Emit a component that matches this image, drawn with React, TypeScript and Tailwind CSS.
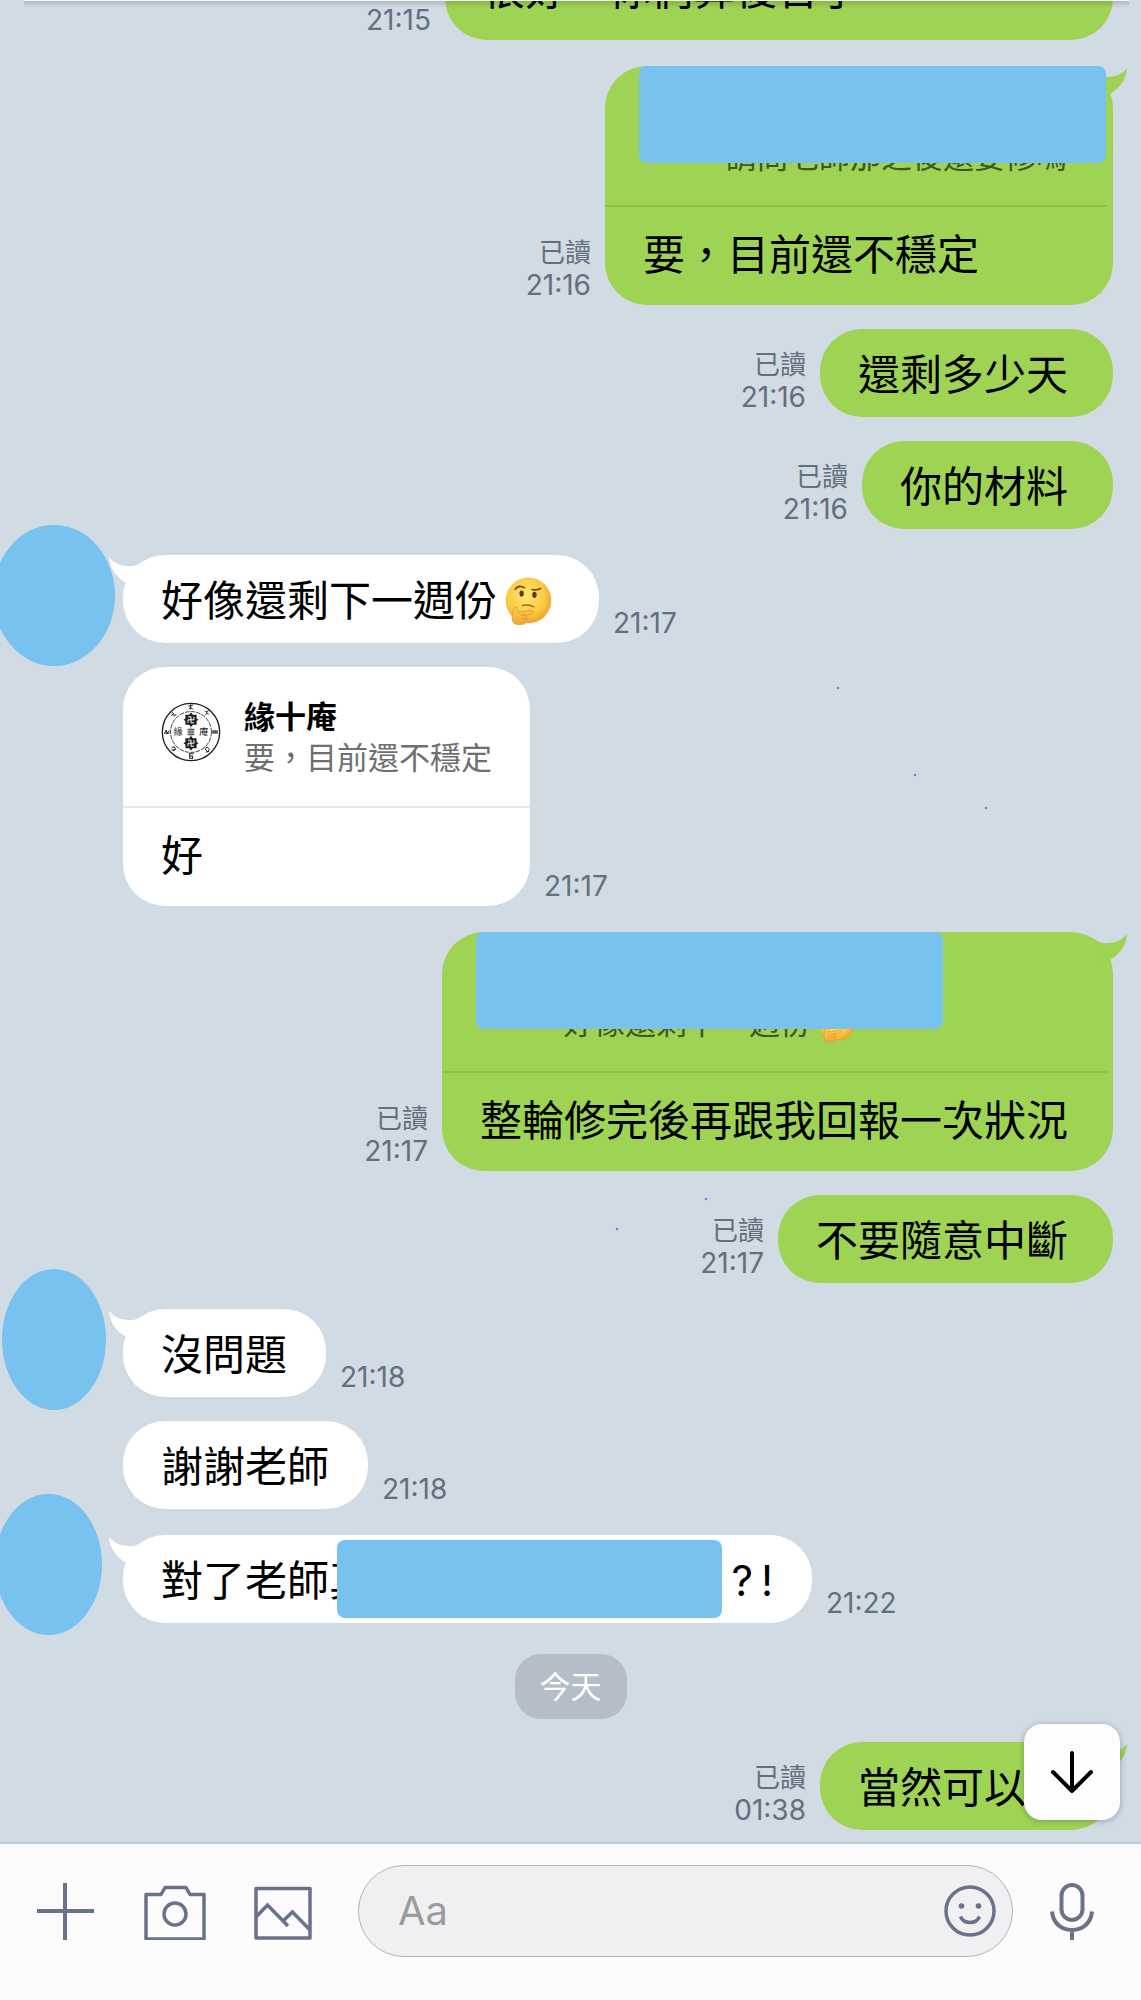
import * as React from "react";
import clsx from "clsx";

type BubbleProps = {
    mine?: boolean;
    tail?: boolean;
    className?: string;
    children: React.ReactNode;
};

type RowProps = {
    mine?: boolean;
    time: string;
    className?: string;
    avatar?: string;
    children: React.ReactNode;
};

type QuoteProps = {
    mine?: boolean;
    name?: string;
    text: React.ReactNode;
    avatar?: React.ReactNode;
    masked?: boolean;
};

function ThinkingFace({ className }: { className?: string }) {
    return (
        <svg viewBox="0 0 156 160" className={clsx("inline-block", className)} role="img" aria-label="🤔">
            <defs>
                <radialGradient id="face" cx="0.45" cy="0.4" r="0.62">
                    <stop offset="0" stopColor="#ffe670" />
                    <stop offset="0.65" stopColor="#fbcb43" />
                    <stop offset="1" stopColor="#eda02c" />
                </radialGradient>
                <linearGradient id="hand" x1="0" y1="0" x2="0" y2="1">
                    <stop offset="0" stopColor="#fdd04c" />
                    <stop offset="1" stopColor="#f0a53a" />
                </linearGradient>
            </defs>
            <circle cx="78" cy="78" r="73" fill="url(#face)" />
            <ellipse cx="56" cy="56" rx="7" ry="10" fill="#5f3a10" />
            <ellipse cx="97" cy="60" rx="7" ry="10" fill="#5f3a10" />
            <path d="M35 43Q46 26 65 38" fill="none" stroke="#6b4313" strokeWidth="5" strokeLinecap="round" />
            <path d="M89 43Q104 47 117 40" fill="none" stroke="#6b4313" strokeWidth="5" strokeLinecap="round" />
            <path d="M59 95Q76 89 95 99" fill="none" stroke="#8a5718" strokeWidth="4" strokeLinecap="round" />
            <path
                d="M34 99Q41 97 43 107L46 116Q64 113 88 110Q96 110 94 117Q92 121 68 126Q76 131 71 138Q73 153 58 155L40 155Q25 151 25 134Q26 116 34 99Z"
                fill="url(#hand)"
                stroke="#d98d28"
                strokeWidth="2"
            />
            <path d="M52 126Q61 122 70 126M55 138Q64 135 71 138" fill="none" stroke="#c97c20" strokeWidth="2" />
        </svg>
    );
}

function Seal() {
    return (
        <svg viewBox="60 64 182 182" className="size-[60px] shrink-0" aria-hidden="true">
            <g fill="none" stroke="#1c1c1c">
                <circle cx="151" cy="155" r="87" strokeWidth="4" />
                <circle cx="151" cy="155" r="62" strokeWidth="2.5" strokeDasharray="14 3" />
                <path d="M140 148h22M140 155h22M140 162h22M145 144v22M151 141v28M157 144v22" strokeWidth="2" />
                <g strokeWidth="3">
                    <path d="M143 77l14-4M150 71v16M144 86l6-6 7 7" />
                    <path d="M193 90l12 12M205 90l-8 4M194 103l6-5" />
                    <path d="M218 149v12M224 148v13M230 149v12M216 155h16" />
                    <path d="M194 206l6-6 7 8-7 7-6-9M196 216l10-2" />
                    <path d="M145 221h14M147 228h10M147 221v14h10M156 228v8" />
                    <path d="M92 204l8-5 4 8-8 6M92 210l12-2" />
                    <path d="M70 161l6-12 2 10 8-9M74 160l12-2" />
                    <path d="M90 106l8-7 2 8 7-7M92 98l4-3" />
                </g>
            </g>
            {[118, 189].map((y) => (
                <g key={y}>
                    <path d={`M151 ${y - 22}l6 7h11v11l6 4-6 4v11h-11l-6 7-6-7h-11v-11l-6-4 6-4v-11h11z`} fill="#222" />
                    <path
                        d={`M151 ${y - 9}v18M142 ${y}h18M151 ${y - 9}h-9M160 ${y}v-9M151 ${y + 9}h9M142 ${y}v9`}
                        stroke="#fff"
                        strokeWidth="3"
                        fill="none"
                    />
                </g>
            ))}
            <g fill="#222" fontSize="28" textAnchor="middle">
                <text x="112" y="165">緣</text>
                <text x="190" y="165">庵</text>
            </g>
        </svg>
    );
}

function Tail({ mine }: { mine?: boolean }) {
    return (
        <svg
            viewBox="0 0 32 30"
            className={clsx("absolute top-[2px] h-[30px] w-8", mine ? "-right-[14px] fill-[#9fd354]" : "-left-[14px] -scale-x-100 fill-white")}
            aria-hidden="true"
        >
            <path d="M0 6Q8 10 12 9Q25 9 32 0Q31 16 15 26L6 30z" />
        </svg>
    );
}

function Bubble({ mine, tail, className, children }: BubbleProps) {
    return (
        <div
            className={clsx(
                "relative rounded-[42px] text-[42px] leading-[50px] text-black",
                mine ? "bg-[#9fd354]" : "bg-white",
                className
            )}
        >
            {tail && <Tail mine={mine} />}
            {children}
        </div>
    );
}

function Row({ mine, time, className, avatar, children }: RowProps) {
    return (
        <div className={clsx("relative flex items-end gap-[14px]", mine ? "flex-row-reverse pr-7" : "pl-[123px]", className)}>
            {avatar && <span className={clsx("absolute h-[141px] rounded-[50%] bg-[#77c2ef]", avatar)} />}
            {children}
            <div className="pb-1 text-right leading-8 text-[#646e7e]">
                {mine && time !== "21:15" && <p className="text-[26px] leading-8">已讀</p>}
                <time className="block text-[28px] leading-8">{time}</time>
            </div>
        </div>
    );
}

function Quote({ mine, name, text, avatar, masked }: QuoteProps) {
    return (
        <div
            className={clsx(
                "relative flex h-[141px] gap-[23px] border-b-2 pt-[29px] pl-[38px] text-[31px] leading-[41px]",
                mine ? "mr-[6px] border-[#8fc04b] pr-10 text-[#40571f]" : "border-[#e3e7ea] pr-[38px] text-[#6f6f6f]"
            )}
        >
            <div className="mt-[6px] size-[60px] shrink-0">{avatar}</div>
            <div>
                <p className="h-[41px] font-bold text-black">{name}</p>
                <p className="flex items-center whitespace-nowrap">{text}</p>
            </div>
            {masked && <span className="absolute top-0 left-[34px] h-[97px] w-[467px] rounded-lg bg-[#77c2ef]" />}
        </div>
    );
}

const pill = "pt-[21px] pb-[17px] pl-[38px]";
const reply = "pt-[23px] pb-[25px] pl-[38px]";

export default function App() {
    const [message, setMessage] = React.useState("");

    return (
        <div
            lang="zh-Hant"
            className="relative flex min-h-screen flex-col overflow-hidden bg-[#d1dbe4] font-['Inter','Noto_Sans_CJK_TC',sans-serif]"
        >
            <div className="absolute top-0 right-3 left-6 z-10 h-2 border-t border-[#f3f5f0] bg-linear-to-b from-black/15 to-transparent" />

            <main className="relative flex-1 pb-[11px]">
                <Row mine time="21:15" className="h-10">
                    <Bubble mine className="w-[668px] shrink-0 pt-[13px] pb-[25px] pl-[38px]">很好，你們算復合了</Bubble>
                </Row>

                <Row mine time="21:16" className="mt-[26px]">
                    <Bubble mine tail>
                        <Quote mine masked text="請問老師那之後還要修嗎" />
                        <p className={clsx(reply, "pr-[45px]")}>要，目前還不穩定</p>
                    </Bubble>
                </Row>
                <Row mine time="21:16" className="mt-6">
                    <Bubble mine className={clsx(pill, "pr-[45px]")}>還剩多少天</Bubble>
                </Row>
                <Row mine time="21:16" className="mt-6">
                    <Bubble mine className={clsx(pill, "pr-[45px]")}>你的材料</Bubble>
                </Row>

                <Row time="21:17" className="mt-[26px]" avatar="-top-[30px] -left-[7px] w-[122px]">
                    <Bubble tail className={clsx(pill, "flex items-center pr-[45px]")}>
                        好像還剩下一週份
                        <ThinkingFace className="ml-[6px] h-[50px] w-[51px]" />
                    </Bubble>
                </Row>
                <Row time="21:17" className="mt-6">
                    <Bubble>
                        <Quote name="緣十庵" text="要，目前還不穩定" avatar={<Seal />} />
                        <p className={reply}>好</p>
                    </Bubble>
                </Row>

                <Row mine time="21:17" className="mt-[26px]">
                    <Bubble mine tail>
                        <Quote
                            mine
                            masked
                            text={
                                <>
                                    好像還剩下一週份
                                    <ThinkingFace className="ml-[6px] size-10" />
                                </>
                            }
                        />
                        <p className={clsx(reply, "pr-[45px]")}>整輪修完後再跟我回報一次狀況</p>
                    </Bubble>
                </Row>
                <Row mine time="21:17" className="mt-6">
                    <Bubble mine className={clsx(pill, "pr-[45px]")}>不要隨意中斷</Bubble>
                </Row>

                <Row time="21:18" className="mt-[26px]" avatar="-top-10 left-[2px] w-[104px]">
                    <Bubble tail className={clsx(pill, "pr-[39px]")}>沒問題</Bubble>
                </Row>
                <Row time="21:18" className="mt-6">
                    <Bubble className={clsx(pill, "pr-[39px]")}>謝謝老師</Bubble>
                </Row>
                <Row time="21:22" className="mt-[26px]" avatar="-top-[41px] -left-[5px] w-[107px]">
                    <Bubble tail className={clsx(pill, "flex w-[689px] justify-between pr-[39px]")}>
                        <span>對了老師真</span>
                        <span className="flex gap-2">
                            <span>’</span>
                            <span>?</span>
                            <span>!</span>
                        </span>
                        <span className="absolute inset-y-[5px] left-[214px] w-[385px] rounded-lg bg-[#77c2ef]" />
                    </Bubble>
                </Row>

                <div className="mt-[31px] flex justify-center">
                    <span className="rounded-[26px] bg-[#b5bdc9] px-[25px] py-3 text-[31px] leading-[41px] text-white">今天</span>
                </div>

                <Row mine time="01:38" className="mt-[23px]">
                    <Bubble mine tail className={clsx(pill, "w-[293px]")}>當然可以</Bubble>
                </Row>

                <button
                    type="button"
                    aria-label="捲動到最新訊息"
                    className="absolute right-[21px] bottom-[22px] flex size-24 items-center justify-center rounded-[18px] bg-[#fdfdfd] shadow-[0_1px_6px_rgba(60,70,90,0.4)]"
                >
                    <svg viewBox="0 0 42 42" className="size-[42px] fill-none stroke-black stroke-4" strokeLinecap="round" strokeLinejoin="round">
                        <path d="M21 2V40M2 21L21 40L40 21" />
                    </svg>
                </button>

                {/* Stray marks on the wallpaper */}
                <svg className="pointer-events-none absolute inset-0 size-full fill-[#4a90e8]" aria-hidden="true">
                    <circle cx="838" cy="688" r="1.3" />
                    <circle cx="915" cy="775" r="1.3" />
                    <circle cx="986" cy="808" r="1.3" />
                    <circle cx="706" cy="1199" r="1.3" />
                    <circle cx="617" cy="1229" r="1.3" />
                </svg>
            </main>

            <footer className="flex items-center border-t-2 border-[#c3c9d0] bg-[#fcfcfd] pt-[21px] pr-[47px] pb-[43px] pl-[37px] text-[#69728b]">
                <button type="button" aria-label="更多" className="mr-[50px]">
                    <svg viewBox="0 0 57 57" className="size-[57px] fill-none stroke-current stroke-4">
                        <path d="M28 0V57M0 28H57" />
                    </svg>
                </button>
                <button type="button" aria-label="相機" className="mr-12">
                    <svg viewBox="0 0 62 57" className="h-[57px] w-[62px] fill-none stroke-current" strokeWidth="3.5" strokeLinejoin="round">
                        <path d="M2 11.500H17L21 4.500H42L46 11.500H60V56H2Z" />
                        <circle cx="31" cy="31" r="11" />
                    </svg>
                </button>
                <button type="button" aria-label="相簿" className="mr-[46px]">
                    <svg viewBox="0 0 58 57" className="h-[57px] w-[58px] fill-none stroke-current" strokeWidth="3.5" strokeLinejoin="round">
                        <path d="M2 5.500H56V55H2Z" />
                        <path d="M2 34L13.500 22L34 43M29 38L38.500 29L56 47" strokeLinejoin="miter" />
                    </svg>
                </button>
                <div className="flex h-[92px] min-w-0 flex-1 items-center rounded-[46px] border border-[#b4b4b6] bg-[#f0f0f2] pr-4 pl-[39px]">
                    <input
                        type="text"
                        aria-label="訊息"
                        placeholder="Aa"
                        value={message}
                        onChange={(e) => setMessage(e.target.value)}
                        className="min-w-0 flex-1 text-[40px] leading-[50px] text-black outline-none placeholder:text-[#9b9b9c]"
                    />
                    <button type="button" aria-label="貼圖">
                        <svg viewBox="0 0 52 52" className="size-[52px] fill-none stroke-current" strokeWidth="3.5">
                            <circle cx="26" cy="26" r="24" />
                            <path d="M16.500 31.500Q19 37.500 26 37.500T35.500 31.500" />
                            <circle cx="17.500" cy="21" r="2.800" className="fill-current stroke-none" />
                            <circle cx="34.500" cy="21" r="2.800" className="fill-current stroke-none" />
                        </svg>
                    </button>
                </div>
                <button type="button" aria-label="語音訊息" className="ml-[37px]">
                    <svg viewBox="0 0 44 57" className="h-[57px] w-11 fill-none stroke-current stroke-4">
                        <rect x="11.500" y="2" width="21" height="35" rx="10.500" />
                        <path d="M2 28.500C3 40 11 47 22 47S41 40 42 28.500M22 47V57" />
                    </svg>
                </button>
            </footer>
        </div>
    );
}
